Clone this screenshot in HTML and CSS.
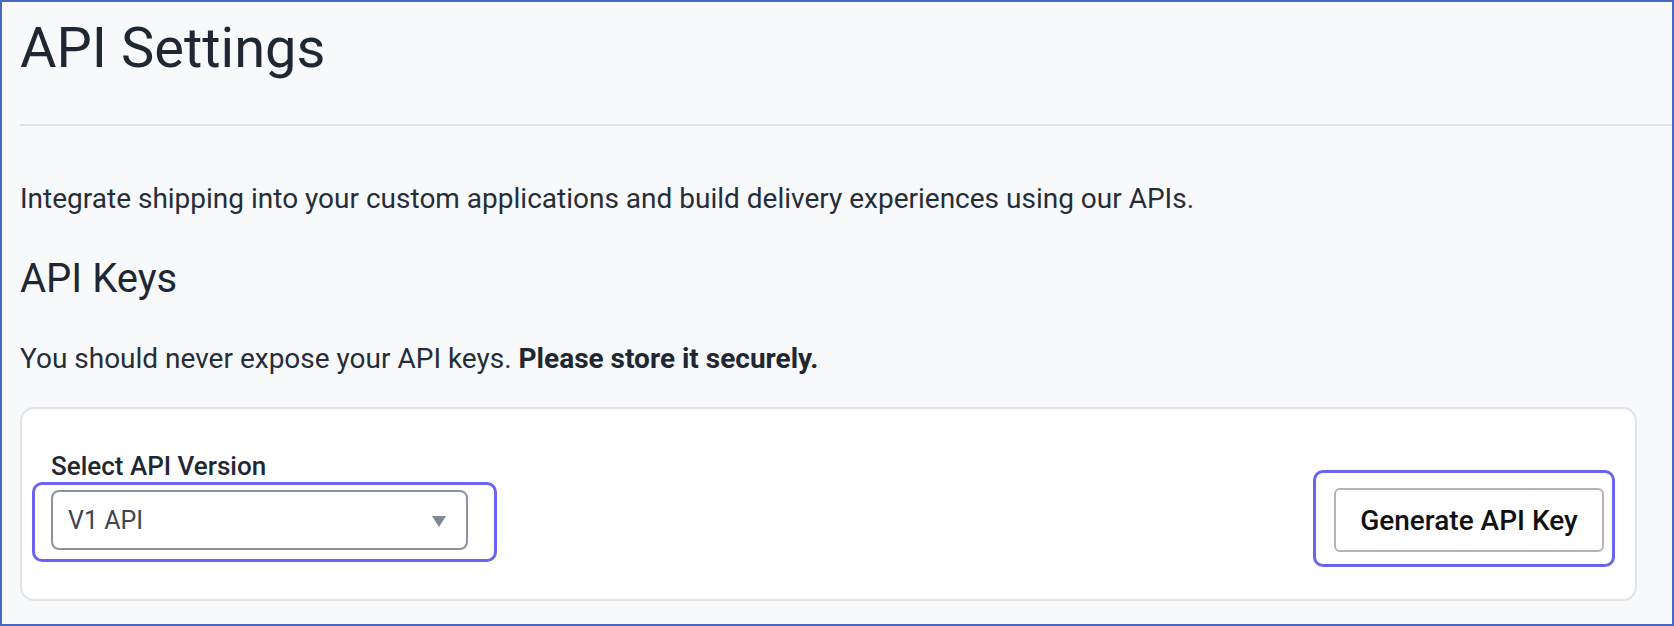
FILE: index.html
```html
<!DOCTYPE html>
<html lang="en">
<head>
  <meta charset="UTF-8">
  <meta name="viewport" content="width=device-width, initial-scale=1">
  <title>API Settings</title>
  <link rel="stylesheet" href="styles.css">
</head>
<body>
  <div class="page">
    <!-- Page header -->
    <div class="header">
      <h1>API Settings</h1>
    </div>
    <hr class="divider">

    <div class="content">
      <p class="intro">Integrate shipping into your custom applications and build delivery experiences using our APIs.</p>

      <h2>API Keys</h2>
      <p class="note">You should never expose your API keys. <strong>Please store it securely.</strong></p>

      <!-- Version picker + generate button -->
      <div class="card">
        <div class="field">
          <label class="field-label">Select API Version</label>
          <div class="highlight highlight-select">
            <div class="select">
              <span>V1 API</span>
              <svg class="caret" width="14" height="11" viewBox="0 0 14 11"><polygon points="0,0 14,0 7,11" fill="#808790"/></svg>
            </div>
          </div>
        </div>
        <div class="highlight highlight-btn">
          <button class="btn">Generate API Key</button>
        </div>
      </div>
    </div>
  </div>
</body>
</html>
```

FILE: styles.css
```css
body {
  margin: 0;
  font-family: Roboto, "Liberation Sans", sans-serif;
  color: #252d38;
}
.page {
  height: 626px;
  box-sizing: border-box;
  border: 2px solid #4668bf;
  background: #f8f9fb;
  overflow: hidden;
}
.header {
  padding: 14px 0 0 18px;
}
h1 {
  margin: 0;
  font-size: 56px;
  line-height: 64px;
  font-weight: 400;
  color: #1f2732;
}
.divider {
  margin: 44px 0 0 18px;
  border: 0;
  height: 2px;
  background: #dfe1e6;
}
.content {
  padding: 0 35px 0 18px;
}
.intro, .note {
  font-size: 28px;
  line-height: 40px;
  margin: 0;
}
.intro {
  margin-top: 53px;
}
.note strong {
  font-weight: 700;
  color: #1f2732;
}
h2 {
  margin: 36px 0 0;
  font-size: 40px;
  line-height: 48px;
  font-weight: 400;
  color: #1f2732;
}
.note {
  margin-top: 36px;
}
.card {
  margin-top: 28px;
  height: 194px;
  box-sizing: border-box;
  background: #fff;
  border: 2px solid #e2e4e8;
  border-radius: 14px;
  padding: 0 31px 49px 29px;
  display: flex;
  justify-content: space-between;
  align-items: flex-end;
}
.field {
  display: flex;
  flex-direction: column;
}
.field-label {
  font-size: 26px;
  line-height: 40px;
  font-weight: 500;
  color: #1f2732;
  margin-bottom: 4px;
}
.select {
  width: 417px;
  height: 60px;
  box-sizing: border-box;
  border: 2px solid #8e939b;
  border-radius: 8px;
  padding: 0 20px 0 15px;
  display: flex;
  align-items: center;
  justify-content: space-between;
  font-size: 25px;
  color: #3f4650;
  background: #fff;
}
.caret {
  margin-top: 2px;
}
.btn {
  height: 64px;
  width: 270px;
  border: 2px solid #b3b5b9;
  border-radius: 6px;
  background: #fff;
  font-family: inherit;
  font-size: 28px;
  font-weight: 500;
  color: #111;
  margin-bottom: -2px;
}
/* purple annotation boxes drawn over the controls */
.highlight {
  position: relative;
}
.highlight::after {
  content: "";
  position: absolute;
  border: 3px solid #6a64f1;
  border-radius: 10px;
  pointer-events: none;
}
.highlight-select::after {
  left: -19px;
  right: -29px;
  top: -8px;
  bottom: -12px;
}
.highlight-btn::after {
  left: -21px;
  right: -11px;
  top: -18px;
  bottom: -17px;
}
```
